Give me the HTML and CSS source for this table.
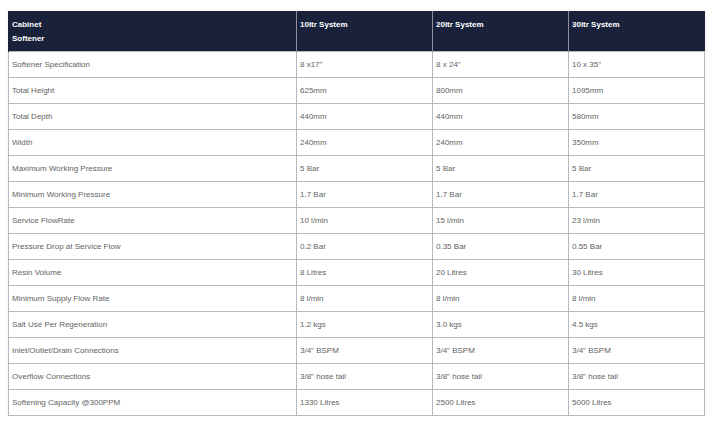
FILE: index.html
```html
<!DOCTYPE html>
<html>
<head>
<meta charset="utf-8">
<link rel="stylesheet" href="styles.css">
</head>
<body>
<table class="spec">
  <colgroup>
    <col class="c1"><col class="c2"><col class="c2"><col class="c2">
  </colgroup>
  <thead>
    <tr><th>Cabinet<br>Softener</th><th>10ltr System</th><th>20ltr System</th><th>30ltr System</th></tr>
  </thead>
  <tbody>
    <tr><td>Softener Specification</td><td>8 x17"</td><td>8 x 24"</td><td>10 x 35"</td></tr>
    <tr><td>Total Height</td><td>625mm</td><td>800mm</td><td>1095mm</td></tr>
    <tr><td>Total Depth</td><td>440mm</td><td>440mm</td><td>580mm</td></tr>
    <tr><td>Width</td><td>240mm</td><td>240mm</td><td>350mm</td></tr>
    <tr><td>Maximum Working Pressure</td><td>5 Bar</td><td>5 Bar</td><td>5 Bar</td></tr>
    <tr><td>Minimum Working Pressure</td><td>1.7 Bar</td><td>1.7 Bar</td><td>1.7 Bar</td></tr>
    <tr><td>Service FlowRate</td><td>10 l/min</td><td>15 l/min</td><td>23 l/min</td></tr>
    <tr><td>Pressure Drop at Service Flow</td><td>0.2 Bar</td><td>0.35 Bar</td><td>0.55 Bar</td></tr>
    <tr><td>Resin Volume</td><td>8 Litres</td><td>20 Litres</td><td>30 Litres</td></tr>
    <tr><td>Minimum Supply Flow Rate</td><td>8 l/min</td><td>8 l/min</td><td>8 l/min</td></tr>
    <tr><td>Salt Use Per Regeneration</td><td>1.2 kgs</td><td>3.0 kgs</td><td>4.5 kgs</td></tr>
    <tr><td>Inlet/Outlet/Drain Connections</td><td>3/4" BSPM</td><td>3/4" BSPM</td><td>3/4" BSPM</td></tr>
    <tr><td>Overflow Connections</td><td>3/8" hose tail</td><td>3/8" hose tail</td><td>3/8" hose tail</td></tr>
    <tr><td>Softening Capacity @300PPM</td><td>1330 Litres</td><td>2500 Litres</td><td>5000 Litres</td></tr>
  </tbody>
</table>
</body>
</html>
```
FILE: styles.css
```css
html, body {
  margin: 0;
  padding: 0;
  background: #ffffff;
}
body {
  padding: 11px 8px 0 8px;
  font-family: "Liberation Sans", Arial, sans-serif;
  font-size: 8px;
}
.spec {
  width: 696px;
  border-collapse: collapse;
  table-layout: fixed;
  box-shadow: 0 0 3px rgba(0,0,0,0.08);
}
.c1 { width: 288px; }
.c2 { width: 136px; }
.spec th {
  background: #19223a;
  color: #ffffff;
  font-weight: bold;
  text-align: left;
  vertical-align: top;
  height: 40px;
  box-sizing: border-box;
  padding: 7px 3px 5px 3px;
  line-height: 14px;
  border-left: 1px solid #8a8f9c;
}
.spec th:first-child { border-left: 1px solid #19223a; }
.spec td {
  color: #636363;
  height: 26px;
  box-sizing: border-box;
  padding: 1px 3px 0 3px;
  line-height: 14px;
  vertical-align: middle;
  border: 1px solid #b9b9b9;
}
```
